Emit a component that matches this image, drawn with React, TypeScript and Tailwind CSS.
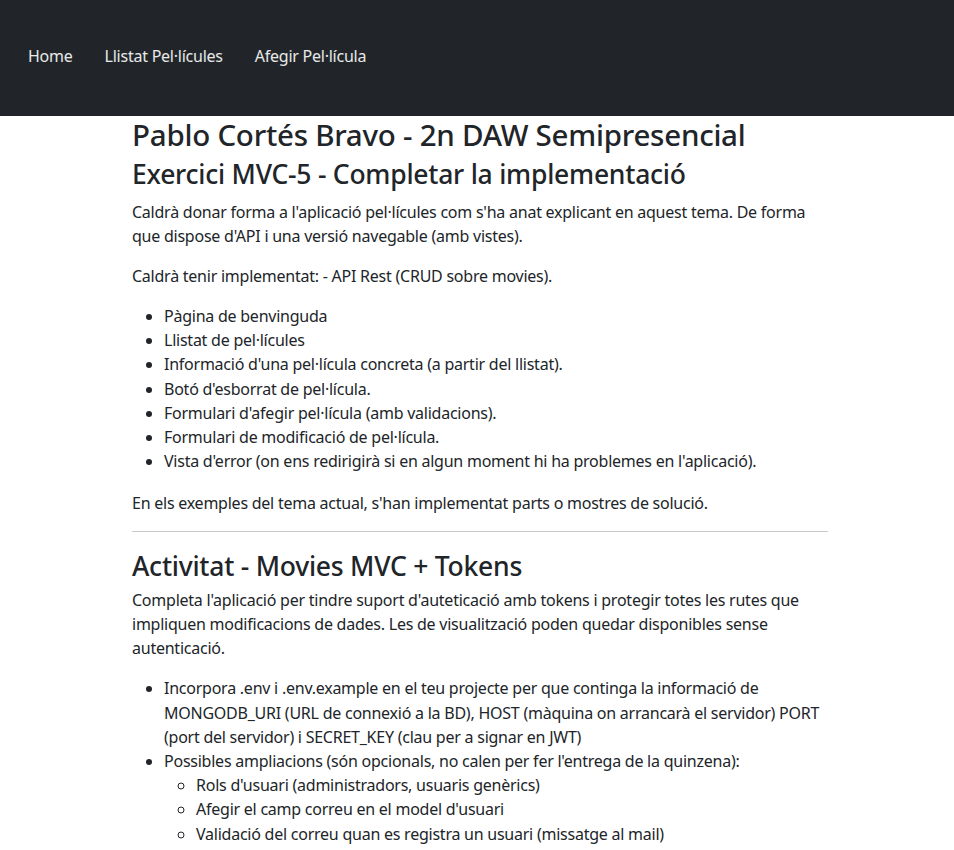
export default function App() {
  const items = [
    "Pàgina de benvinguda",
    "Llistat de pel·lícules",
    "Informació d'una pel·lícula concreta (a partir del llistat).",
    "Botó d'esborrat de pel·lícula.",
    "Formulari d'afegir pel·lícula (amb validacions).",
    "Formulari de modificació de pel·lícula.",
    "Vista d'error (on ens redirigirà si en algun moment hi ha problemes en l'aplicació).",
  ];

  return (
    <div className="min-h-screen bg-white text-[#212529] text-base leading-6 tracking-[-0.015em]" style={{ fontFamily: '"Noto Sans", sans-serif' }}>
      <nav className="h-[116px] bg-[#212529] pt-[44px] px-3">
        <ul className="flex">
          <li><a className="block px-4 text-white/90">Home</a></li>
          <li><a className="block px-4 text-white/90">Llistat Pel·lícules</a></li>
          <li><a className="block px-4 text-white/90">Afegir Pel·lícula</a></li>
        </ul>
      </nav>

      <main className="w-[696px] ml-[132px]">
        <h1 className="text-[29.5px] leading-[38px] font-medium">Pablo Cortés Bravo - 2n DAW Semipresencial</h1>
        <h2 className="text-[26.5px] leading-[36px] font-medium mb-2 mt-[2px]">Exercici MVC-5 - Completar la implementació</h2>
        <p className="mb-4">
          Caldrà donar forma a l'aplicació pel·lícules com s'ha anat explicant en aquest tema. De forma que dispose d'API i una versió navegable (amb vistes).
        </p>
        <p className="mb-4">Caldrà tenir implementat: - API Rest (CRUD sobre movies).</p>
        <ul className="list-disc pl-8 mb-[18px] leading-[24.2px]">
          {items.map((t) => (
            <li key={t}>{t}</li>
          ))}
        </ul>
        <p className="mb-4">En els exemples del tema actual, s'han implementat parts o mostres de solució.</p>
        <hr className="my-4 border-t border-[#c8c9ca]" />
        <h2 className="text-[26.5px] leading-[36px] font-medium mb-1">Activitat - Movies MVC + Tokens</h2>
        <p className="mb-4">
          Completa l'aplicació per tindre suport d'auteticació amb tokens i protegir totes les rutes que impliquen modificacions de dades. Les de visualització poden quedar disponibles sense autenticació.
        </p>
        <ul className="list-disc pl-8 mb-4 leading-[24.2px]">
          <li>
            Incorpora .env i .env.example en el teu projecte per que continga la informació de MONGODB_URI (URL de connexió a la BD), HOST (màquina on arrancarà el servidor) PORT (port del servidor) i SECRET_KEY (clau per a signar en JWT)
          </li>
          <li>
            Possibles ampliacions (són opcionals, no calen per fer l'entrega de la quinzena):
            <ul className="list-[circle] pl-8">
              <li>Rols d'usuari (administradors, usuaris genèrics)</li>
              <li>Afegir el camp correu en el model d'usuari</li>
              <li>Validació del correu quan es registra un usuari (missatge al mail)</li>
            </ul>
          </li>
        </ul>
      </main>
    </div>
  );
}
